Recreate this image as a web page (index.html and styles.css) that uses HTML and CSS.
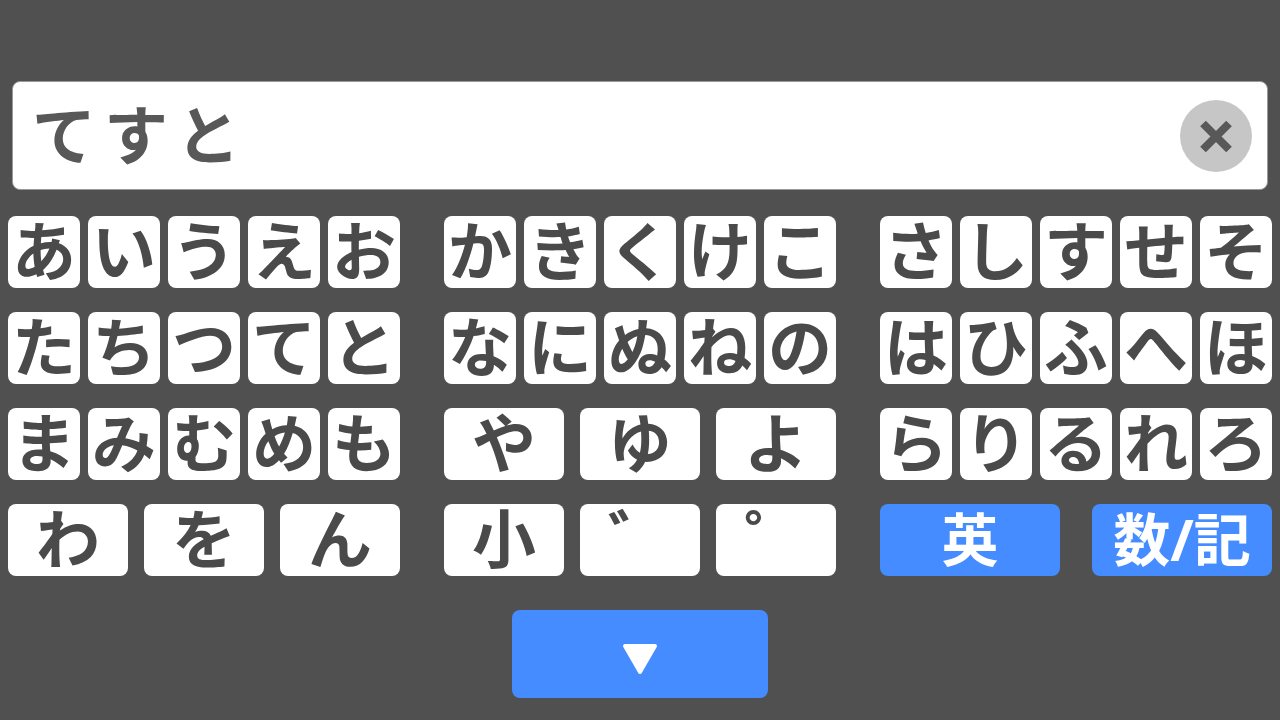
FILE: index.html
```html
<!DOCTYPE html>
<html lang="ja">
<head>
<meta charset="utf-8">
<meta name="viewport" content="width=device-width, initial-scale=1">
<title>かなキーボード</title>
<link rel="stylesheet" href="styles.css">
</head>
<body>
<main class="screen">
  <form class="field">
    <input class="field-input" type="text" value="てすと" aria-label="入力">
    <button class="clear" type="reset" aria-label="消去">
      <svg class="clear-icon" viewBox="0 0 72 72" aria-hidden="true"><path d="M23 23.500L49 49.500M49 23.500L23 49.500"/></svg>
    </button>
  </form>
  <div class="keyboard">
    <div class="group"><button class="key">あ</button><button class="key">い</button><button class="key">う</button><button class="key">え</button><button class="key">お</button></div>
    <div class="group"><button class="key">か</button><button class="key">き</button><button class="key">く</button><button class="key">け</button><button class="key">こ</button></div>
    <div class="group"><button class="key">さ</button><button class="key">し</button><button class="key">す</button><button class="key">せ</button><button class="key">そ</button></div>
    <div class="group"><button class="key">た</button><button class="key">ち</button><button class="key">つ</button><button class="key">て</button><button class="key">と</button></div>
    <div class="group"><button class="key">な</button><button class="key">に</button><button class="key">ぬ</button><button class="key">ね</button><button class="key">の</button></div>
    <div class="group"><button class="key">は</button><button class="key">ひ</button><button class="key">ふ</button><button class="key">へ</button><button class="key">ほ</button></div>
    <div class="group"><button class="key">ま</button><button class="key">み</button><button class="key">む</button><button class="key">め</button><button class="key">も</button></div>
    <div class="group group-three"><button class="key">や</button><button class="key">ゆ</button><button class="key">よ</button></div>
    <div class="group"><button class="key">ら</button><button class="key">り</button><button class="key">る</button><button class="key">れ</button><button class="key">ろ</button></div>
    <div class="group group-three"><button class="key">わ</button><button class="key">を</button><button class="key">ん</button></div>
    <div class="group group-three"><button class="key">小</button><button class="key">゛</button><button class="key">゜</button></div>
    <div class="group group-two"><button class="key key-blue">英</button><button class="key key-blue">数/記</button></div>
  </div>
  <button class="close" aria-label="閉じる">
    <svg class="close-icon" viewBox="0 0 36 32" aria-hidden="true"><path d="M3 3H33L18 29Z"/></svg>
  </button>
</main>
</body>
</html>
```
FILE: styles.css
```css
* { box-sizing: border-box; }

body {
  margin: 0;
  min-height: 100vh;
  background: #505050;
  color: #4a4a4a;
  font-family: "Noto Sans CJK JP", sans-serif;
}

button, input { font: inherit; color: inherit; }

.screen {
  display: flex;
  flex-direction: column;
  padding: 81px 8px 22px;
}

.field {
  display: flex;
  align-items: center;
  height: 109px;
  margin: 0 4px 26px;
  padding: 0 15px 0 19px;
  background: #fff;
  border: 1px solid #999;
  border-radius: 8px;
}

.field-input {
  flex: 1;
  min-width: 0;
  height: 96px;
  padding: 0 0 10px;
  border: 0;
  outline: 0;
  background: none;
  color: #585858;
  font-size: 64px;
  font-weight: 700;
  letter-spacing: 8px;
}

.clear {
  width: 72px;
  height: 72px;
  padding: 0;
  border: 0;
  border-radius: 50%;
  background: #c6c6c6;
}

.clear-icon {
  display: block;
  fill: none;
  stroke: #585858;
  stroke-width: 8;
}

.keyboard {
  display: grid;
  grid-template-columns: repeat(3, 1fr);
  gap: 24px 44px;
}

.group { display: grid; grid-template-columns: repeat(5, 1fr); gap: 8px; }
.group-three { grid-template-columns: repeat(3, 1fr); gap: 16px; }
.group-two { grid-template-columns: repeat(2, 1fr); gap: 32px; }

.key {
  min-width: 0;
  height: 72px;
  padding: 0 0 10px;
  border: 0;
  border-radius: 8px;
  background: #fff;
  font-size: 64px;
  font-weight: 700;
  line-height: 62px;
  white-space: nowrap;
}

.key-blue {
  padding: 0 0 2px;
  background: #448cff;
  color: #fff;
  font-family: "Open Sans", "Noto Sans CJK JP", sans-serif;
  font-size: 57px;
}

.close {
  align-self: center;
  display: flex;
  align-items: center;
  justify-content: center;
  width: 256px;
  height: 88px;
  margin-top: 34px;
  padding: 10px 0 0;
  border: 0;
  border-radius: 8px;
  background: #448cff;
}

.close-icon {
  width: 36px;
  fill: #fff;
  stroke: #fff;
  stroke-width: 4;
  stroke-linejoin: round;
}
```
